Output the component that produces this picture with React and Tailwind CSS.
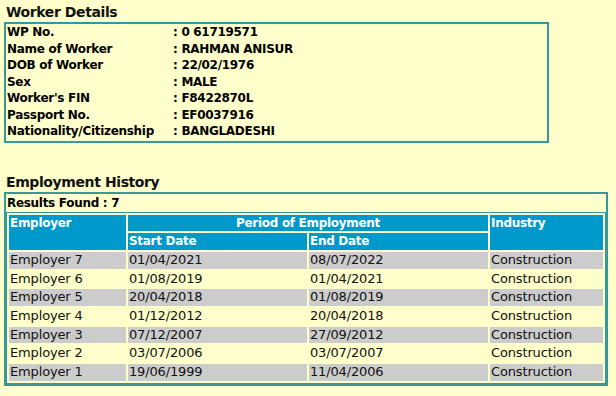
import React from 'react';

const worker = [
  ['WP No.', '0 61719571'],
  ['Name of Worker', 'RAHMAN ANISUR'],
  ['DOB of Worker', '22/02/1976'],
  ['Sex', 'MALE'],
  ["Worker's FIN", 'F8422870L'],
  ['Passport No.', 'EF0037916'],
  ['Nationality/Citizenship', 'BANGLADESHI'],
];

const history = [
  ['Employer 7', '01/04/2021', '08/07/2022', 'Construction'],
  ['Employer 6', '01/08/2019', '01/04/2021', 'Construction'],
  ['Employer 5', '20/04/2018', '01/08/2019', 'Construction'],
  ['Employer 4', '01/12/2012', '20/04/2018', 'Construction'],
  ['Employer 3', '07/12/2007', '27/09/2012', 'Construction'],
  ['Employer 2', '03/07/2006', '03/07/2007', 'Construction'],
  ['Employer 1', '19/06/1999', '11/04/2006', 'Construction'],
];

const font = "font-['Verdana','DejaVu_Sans',sans-serif]";

export default function App() {
  return (
    <div className={`min-h-[396px] w-[616px] bg-[#ffffcc] text-black ${font}`}>
      <div className="pl-1">
        <h2 className="h-[22px] pl-[2px] text-[14px] font-bold leading-[24px] tracking-[-0.4px] text-[#111]">Worker Details</h2>
        <div className="w-[545px] border-2 border-[#339999] pl-px pb-px">
          {worker.map(([label, value]) => (
            <div key={label} className="flex text-[12px] font-bold leading-[16.5px] tracking-[-0.3px]">
              <span className="w-[166px]">{label}</span>
              <span>: {value}</span>
            </div>
          ))}
        </div>

        <h2 className="mt-[27px] h-[22px] pl-[2px] text-[14px] font-bold leading-[24px] tracking-[-0.4px] text-[#111]">Employment History</h2>
        <div className="w-[604px] border-2 border-[#339999]">
          <div className="h-[18px] pl-px text-[12px] font-bold leading-[18px] tracking-[-0.3px]">Results Found : 7</div>
          <table className="w-[600px] table-fixed border border-separate border-spacing-[2px] border-[#339999] text-[13px]">
            <colgroup>
              <col className="w-[117px]" />
              <col className="w-[179px]" />
              <col className="w-[179px]" />
              <col />
            </colgroup>
            <thead className="text-[12px] tracking-[-0.3px]">
              <tr className="h-[16.7px] bg-[#0099cc] font-bold text-white leading-[16.7px]">
                <th rowSpan={2} className="px-px py-0 text-left align-top">Employer</th>
                <th colSpan={2} className="p-0 text-center">Period of Employment</th>
                <th rowSpan={2} className="px-px py-0 text-left align-top">Industry</th>
              </tr>
              <tr className="h-[16.7px] bg-[#0099cc] font-bold text-white leading-[16.7px]">
                <th className="px-px py-0 text-left">Start Date</th>
                <th className="px-px py-0 text-left">End Date</th>
              </tr>
            </thead>
            <tbody className="tracking-[-0.15px]">
              {history.map((row, i) => (
                <tr key={row[0]} className={`h-[16.7px] leading-[16.7px] text-[#111] ${i % 2 === 0 ? 'bg-[#cccccc]' : ''}`}>
                  {row.map((cell, j) => (
                    <td key={j} className="px-px py-0">{cell}</td>
                  ))}
                </tr>
              ))}
            </tbody>
          </table>
        </div>
      </div>
    </div>
  );
}
